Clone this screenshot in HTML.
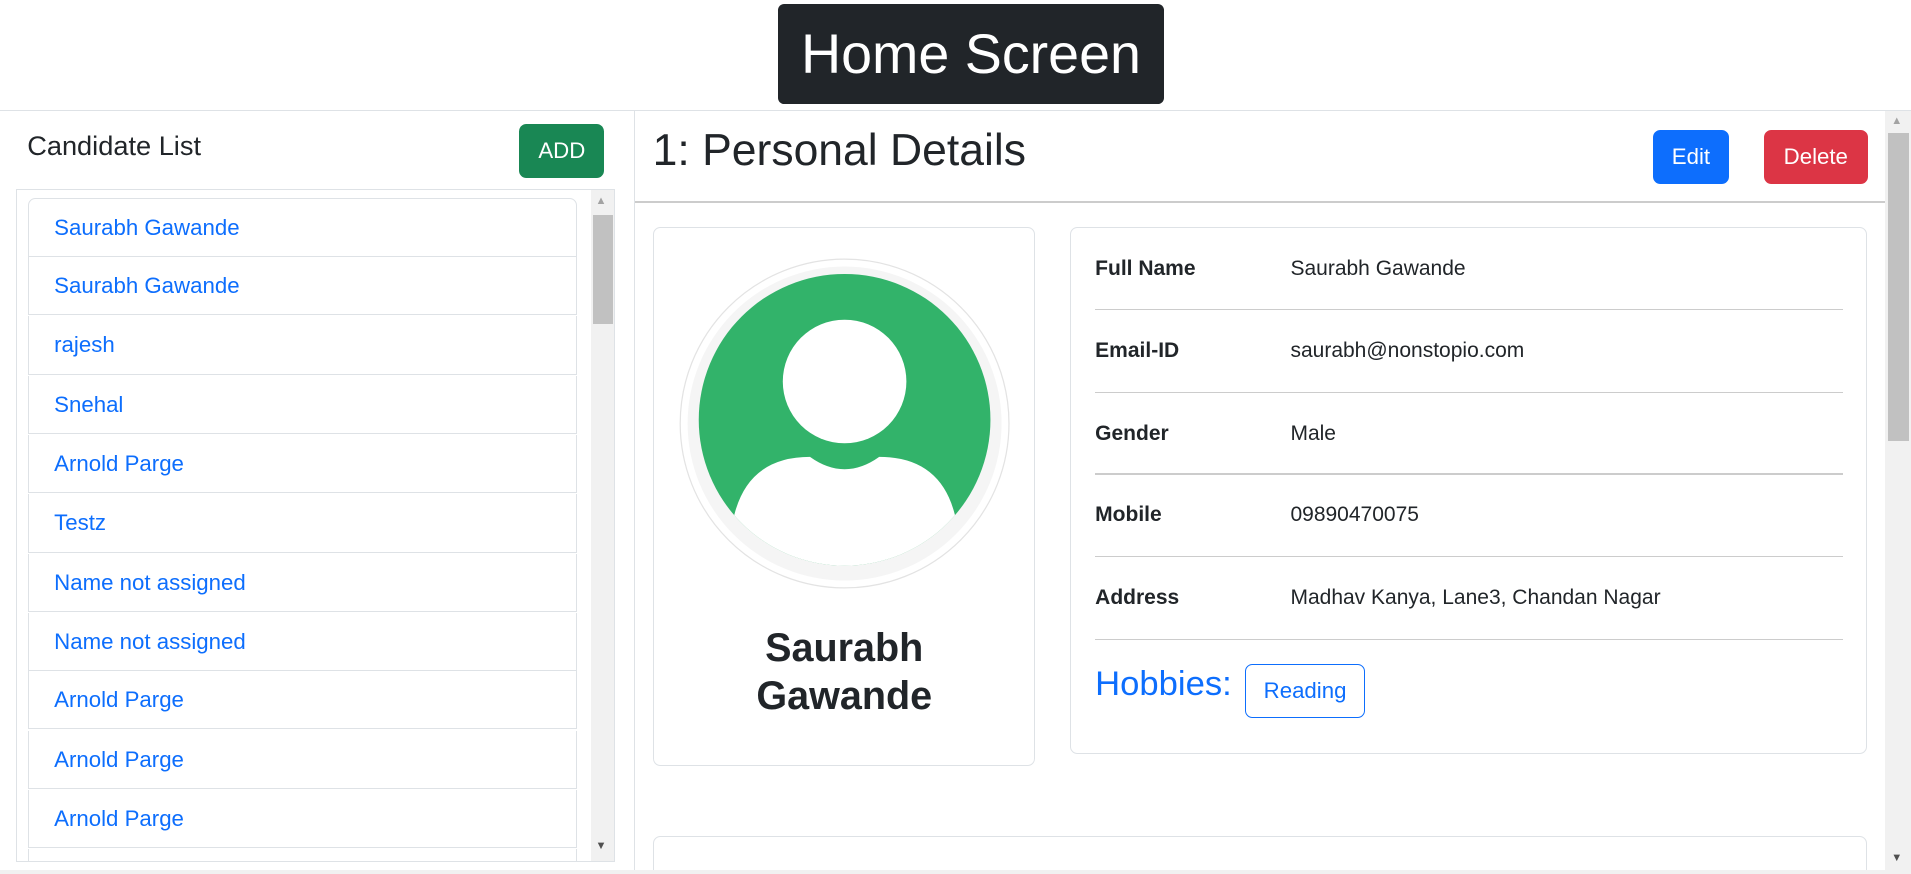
<!DOCTYPE html>
<html><head><meta charset="utf-8"><style>
html,body{margin:0;padding:0;width:1911px;height:874px;overflow:hidden;background:#fff}
#w{zoom:1.23609;position:relative;width:1546px;height:707px;font-family:"Liberation Sans",sans-serif;color:#212529}
.a{position:absolute}
.title{left:629px;top:3px;width:313px;height:81px;background:#212529;border-radius:5px;color:#fff;font-size:45px;line-height:81px;text-align:center}
.li{position:absolute;left:23px;width:444px;height:47px;border:1px solid #dee2e6;border-top:none;color:#0d6efd;font-size:18px;line-height:47px;padding-left:20px;box-sizing:border-box}
.btn{position:absolute;border-radius:6px;color:#fff;font-size:18px;text-align:center}
.lab{position:absolute;left:886px;font-size:17px;font-weight:bold}
.val{position:absolute;left:1044px;font-size:17px}
.hr{position:absolute;left:886px;width:605px;height:1px;background:#ccc}
</style></head><body><div id="w">
<div class="a title">Home Screen</div>
<div class="a" style="left:0;top:89px;width:1546px;height:1px;background:#dee2e6"></div>
<div class="a" style="left:513px;top:89px;width:1px;height:618px;background:#dee2e6"></div>
<div class="a" style="left:22px;top:105px;font-size:22px;font-weight:500">Candidate List</div>
<div class="btn" style="left:420px;top:100px;width:69px;height:44px;line-height:44px;background:#198754">ADD</div>
<div class="a" style="left:13px;top:153px;width:483px;height:543px;border:1px solid #dee2e6;overflow:hidden">
<div class="a" style="left:464px;top:0;width:20px;height:543px;background:#f1f1f1"></div>
<div class="a" style="left:466px;top:20px;width:16px;height:88px;background:#c1c1c1"></div>
<div class="a" style="left:468px;top:4px;font-size:9px;color:#a3a3a3">▲</div>
<div class="a" style="left:468px;top:526px;font-size:9px;color:#505050">▼</div>
</div>
<div class="li" style="top:160px;border-top:1px solid #dee2e6;border-radius:6px 6px 0 0;height:48px">Saurabh Gawande</div>
<div class="li" style="top:208px">Saurabh Gawande</div>
<div class="li" style="top:256px">rajesh</div>
<div class="li" style="top:304px">Snehal</div>
<div class="li" style="top:352px">Arnold Parge</div>
<div class="li" style="top:400px">Testz</div>
<div class="li" style="top:448px">Name not assigned</div>
<div class="li" style="top:496px">Name not assigned</div>
<div class="li" style="top:543px">Arnold Parge</div>
<div class="li" style="top:591px">Arnold Parge</div>
<div class="li" style="top:639px">Arnold Parge</div>
<div class="li" style="top:687px;height:10px"></div>
<div class="a" style="left:528px;top:102px;font-size:36px;font-weight:500">1: Personal Details</div>
<div class="btn" style="left:1337px;top:105px;width:62px;height:44px;line-height:44px;background:#0d6efd">Edit</div>
<div class="btn" style="left:1427px;top:105px;width:84px;height:44px;line-height:44px;background:#dc3545">Delete</div>
<div class="a" style="left:514px;top:163px;width:1011px;height:1px;background:#ccc"></div>
<div class="a" style="left:1525px;top:90px;width:21px;height:617px;background:#f1f1f1"></div>
<div class="a" style="left:1527px;top:108px;width:17px;height:249px;background:#c1c1c1"></div>
<div class="a" style="left:1530px;top:93px;font-size:9px;color:#a3a3a3">▲</div>
<div class="a" style="left:1530px;top:689px;font-size:9px;color:#505050">▼</div>
<div class="a" style="left:528px;top:184px;width:308px;height:434px;border:1px solid #dee2e6;border-radius:6px"></div>
<svg class="a" style="left:528px;top:184px" width="310" height="300" viewBox="528 184 310 300">
<defs><clipPath id="c"><circle cx="683" cy="340" r="118"/></clipPath></defs>
<circle cx="683" cy="343" r="133" fill="#fff" stroke="#e3e3e3"/>
<circle cx="683" cy="343" r="127" fill="#f5f5f5"/>
<circle cx="683" cy="340" r="118" fill="#32b36a"/>
<g clip-path="url(#c)" fill="#fff">
<circle cx="683" cy="309" r="50"/>
<path d="M655 370 Q683 390 711 370 Q760 370 772 416 L790 480 L576 480 L594 416 Q606 370 655 370Z"/>
</g>
</svg>
<div class="a" style="left:528px;top:505px;width:310px;text-align:center;font-size:32px;font-weight:bold;line-height:39px">Saurabh<br>Gawande</div>
<div class="a" style="left:866px;top:184px;width:643px;height:424px;border:1px solid #dee2e6;border-radius:6px"></div>
<div class="lab" style="top:208px">Full Name</div><div class="val" style="top:208px">Saurabh Gawande</div>
<div class="hr" style="top:250px"></div>
<div class="lab" style="top:274px">Email-ID</div><div class="val" style="top:274px">saurabh@nonstopio.com</div>
<div class="hr" style="top:317px"></div>
<div class="lab" style="top:341px">Gender</div><div class="val" style="top:341px">Male</div>
<div class="hr" style="top:383px"></div>
<div class="lab" style="top:407px">Mobile</div><div class="val" style="top:407px">09890470075</div>
<div class="hr" style="top:450px"></div>
<div class="lab" style="top:474px">Address</div><div class="val" style="top:474px">Madhav Kanya, Lane3, Chandan Nagar</div>
<div class="hr" style="top:517px"></div>
<div class="a" style="left:886px;top:538px;font-size:28px;color:#0d6efd;font-weight:500">Hobbies:</div>
<div class="a" style="left:1007px;top:537px;width:96px;height:42px;border:1px solid #0d6efd;border-radius:6px;color:#0d6efd;font-size:18px;line-height:42px;text-align:center">Reading</div>
<div class="a" style="left:528px;top:676px;width:981px;height:40px;border:1px solid #dee2e6;border-radius:6px"></div>
<div class="a" style="left:0;top:704px;width:1546px;height:3px;background:#f1f1f1"></div>
</div></body></html>
